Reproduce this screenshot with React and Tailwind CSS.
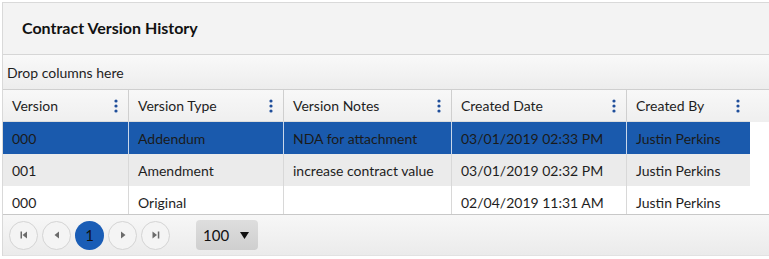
const columns = [
  { title: 'Version', w: 'w-[126px]' },
  { title: 'Version Type', w: 'w-[155px]' },
  { title: 'Version Notes', w: 'w-[168px]' },
  { title: 'Created Date', w: 'w-[175px]' },
  { title: 'Created By', w: 'w-[123px]' },
];

const rows = [
  { cells: ['000', 'Addendum', 'NDA for attachment', '03/01/2019 02:33 PM', 'Justin Perkins'], selected: true },
  { cells: ['001', 'Amendment', 'increase contract value', '03/01/2019 02:32 PM', 'Justin Perkins'], alt: true },
  { cells: ['000', 'Original', '', '02/04/2019 11:31 AM', 'Justin Perkins'] },
];

function Dots() {
  return (
    <svg width="4" height="14" viewBox="0 0 4 14" className="shrink-0">
      <circle cx="2" cy="2" r="1.6" fill="#1f4e9a" />
      <circle cx="2" cy="7" r="1.6" fill="#1f4e9a" />
      <circle cx="2" cy="12" r="1.6" fill="#1f4e9a" />
    </svg>
  );
}

function PagerButton({ children, active }) {
  return (
    <div
      className={
        active
          ? 'w-[29px] h-[29px] rounded-full bg-[#1a5db6] flex items-center justify-center text-[15px] text-[#111]'
          : 'w-[29px] h-[29px] rounded-full border border-[#d4d4d4] bg-[#f4f4f4] flex items-center justify-center'
      }
    >
      {children}
    </div>
  );
}

export default function App() {
  return (
    <div className="w-[769px] h-[259px] bg-white overflow-hidden pt-[2px] pl-[2px]" style={{ fontFamily: 'Lato, "Open Sans", sans-serif' }}>
      <div className="border-l border-t border-[#d9d9d9] text-[#1e1e1e]">
        <div className="h-[52px] bg-[#f3f3f3] border-b border-[#d6d6d6] flex items-center pl-[19px] pb-[1px]">
          <span className="text-[16px] font-bold text-[#111]">Contract Version History</span>
        </div>
        <div className="h-[35px] bg-gradient-to-b from-[#f9f9f9] to-[#ededed] border-b border-[#cfcfcf] flex items-center pl-[4px] text-[14px]">
          Drop columns here
        </div>
        <div className="h-[32px] bg-gradient-to-b from-[#f8f8f8] to-[#efefef] flex">
          <div className="flex border-b border-[#dcdcdc]">
            {columns.map((c, i) => (
              <div key={c.title} className={`${c.w} h-full flex items-center justify-between pl-[9px] pr-[10px] text-[14px] ${i < columns.length - 1 ? 'border-r border-[#cfcfcf]' : ''}`}>
                <span>{c.title}</span>
                <Dots />
              </div>
            ))}
          </div>
        </div>
        <div className="h-[92px] overflow-hidden">
          {rows.map((r, ri) => (
            <div key={ri} className="flex h-[32px]">
              {r.cells.map((cell, i) => (
                <div
                  key={i}
                  className={`${columns[i].w} h-full flex items-center pl-[9px] text-[14px] ${
                    r.selected ? 'bg-[#1a5aad] text-[#1a1a1a]' : r.alt ? 'bg-[#ebebeb]' : 'bg-white'
                  } ${i < columns.length - 1 ? (r.selected ? 'border-r border-[#c9d7ea]' : 'border-r border-[#d8d8d8]') : ''}`}
                >
                  {cell}
                </div>
              ))}
            </div>
          ))}
        </div>
        <div className="h-[42px] border-t border-[#c8c8c8] border-b border-b-[#e2e2e2] bg-gradient-to-b from-[#f7f7f7] to-[#ebebeb] flex items-center pl-[6px]">
          <div className="flex items-center gap-[4px]">
            <PagerButton>
              <svg width="8" height="8" viewBox="0 0 8 8"><rect x="0.5" y="0.5" width="1.5" height="7" fill="#6b6b6b" /><path d="M7 0.5 L2.5 4 L7 7.5 Z" fill="#6b6b6b" /></svg>
            </PagerButton>
            <PagerButton>
              <svg width="6" height="8" viewBox="0 0 6 8"><path d="M5 0.5 L0.5 4 L5 7.5 Z" fill="#6b6b6b" /></svg>
            </PagerButton>
            <PagerButton active>1</PagerButton>
            <PagerButton>
              <svg width="6" height="8" viewBox="0 0 6 8"><path d="M1 0.5 L5.5 4 L1 7.5 Z" fill="#6b6b6b" /></svg>
            </PagerButton>
            <PagerButton>
              <svg width="8" height="8" viewBox="0 0 8 8"><path d="M0.5 0.5 L5 4 L0.5 7.5 Z" fill="#6b6b6b" /><rect x="5.8" y="0.5" width="1.5" height="7" fill="#6b6b6b" /></svg>
            </PagerButton>
          </div>
          <div className="ml-[26px] w-[62px] h-[30px] rounded-[4px] bg-gradient-to-b from-[#dedede] to-[#cfcfcf] flex items-center justify-between pl-[7px] pr-[9px] text-[15px] text-[#111]">
            <span>100</span>
            <svg width="9" height="7" viewBox="0 0 9 7"><path d="M0 0 L9 0 L4.5 7 Z" fill="#111" /></svg>
          </div>
        </div>
      </div>
    </div>
  );
}
